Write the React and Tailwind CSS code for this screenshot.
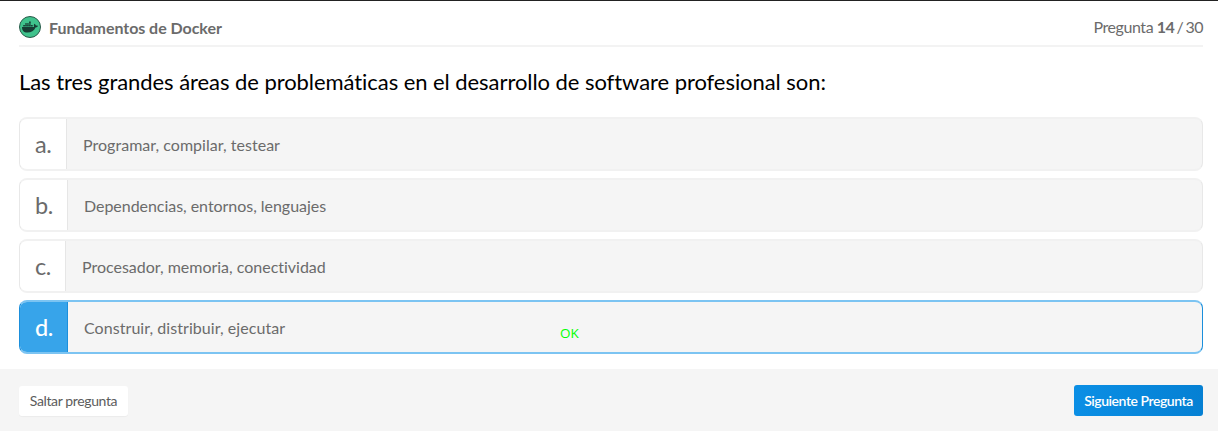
import { FaDocker } from 'react-icons/fa';

const options = [
  ['a.', 'Programar, compilar, testear', 'w-[47px]', 'tracking-[0.03px]'],
  ['b.', 'Dependencias, entornos, lenguajes', 'w-[48px]', 'tracking-[-0.04px]'],
  ['c.', 'Procesador, memoria, conectividad', 'w-[46px]', 'tracking-[-0.01px]'],
  ['d.', 'Construir, distribuir, ejecutar', 'w-[48px]', 'tracking-[0.06px]'],
];

function Option({ letter, text, width, tracking, selected }) {
  return (
    <div className={`relative flex h-[54px] overflow-hidden rounded-[8px] border-x border-y-2 bg-[#f5f5f5] ${selected ? 'border-x-[#1b8fdc] border-y-[#7cc4f2]' : 'border-x-[#e8e8e8] border-y-[#f1f1f1]'}`}>
      <div className={`flex shrink-0 items-center border-r pt-0.5 pl-[15px] text-[23.5px] tracking-[-0.5px] ${width} ${selected ? 'border-[#1b8fdc] bg-[#37a4ea] font-medium text-white' : 'border-[#e6e6e6] bg-white text-[#6b6b6b]'}`}>
        {letter}
      </div>
      <div className={`flex items-center pt-px pl-4 text-[16px] text-[#6b6b6b] ${tracking}`}>{text}</div>
      {selected && <span className="absolute top-[22px] left-[540px] font-['Open_Sans',sans-serif] text-[13.5px] leading-[18px] text-[#00ff00]">OK</span>}
    </div>
  );
}

export default function App() {
  return (
    <div className="flex h-[433px] flex-col border-t border-[#222] bg-white font-['Lato',sans-serif] [font-variant-ligatures:none]">
      <header className="mr-[15px] ml-[19px] flex h-[46px] items-center justify-between border-b-2 border-[#f3f3f3] pt-[7px] text-[16px] text-[#6b6b6b]">
        <div className="flex items-center gap-2 font-bold">
          <span className="flex size-[22px] items-center justify-center rounded-full border border-[#285a49] bg-[#3fc28c] text-[#173c34]">
            <FaDocker size={16} />
          </span>
          <span className="pt-0.5 tracking-[-0.04px]">Fundamentos de Docker</span>
        </div>
        <div className="tracking-[-0.5px]"><span className="tracking-[-0.44px]">Pregunta</span> <b>14</b><span className="[word-spacing:-1.4px]"> / 30</span></div>
      </header>
      <h1 className="mt-[19px] ml-[19px] text-[22px] leading-[32px] tracking-[-0.06px] text-black">Las tres grandes áreas de problemáticas en el desarrollo de software profesional son:</h1>
      <main className="mt-[19px] mr-[15px] ml-[19px] flex flex-col gap-[7px]">
        {options.map(([l, t, w, s], i) => <Option key={l} letter={l} text={t} width={w} tracking={s} selected={i === 3} />)}
      </main>
      <footer className="mt-[15px] flex h-[62px] items-center justify-between bg-[#f5f5f5] pt-px pr-[15px] pl-[19px] text-[14px]">
        <button className="h-[30px] w-[109px] rounded-[3px] bg-white tracking-[-0.37px] text-[#5c5c5c] shadow-[0_1px_1px_#0000000a]">Saltar pregunta</button>
        <button className="h-[31px] w-[129px] rounded-[3px] bg-linear-to-r from-[#0b8fe5] to-[#0580d3] font-semibold tracking-[-0.45px] text-white">Siguiente Pregunta</button>
      </footer>
    </div>
  );
}
